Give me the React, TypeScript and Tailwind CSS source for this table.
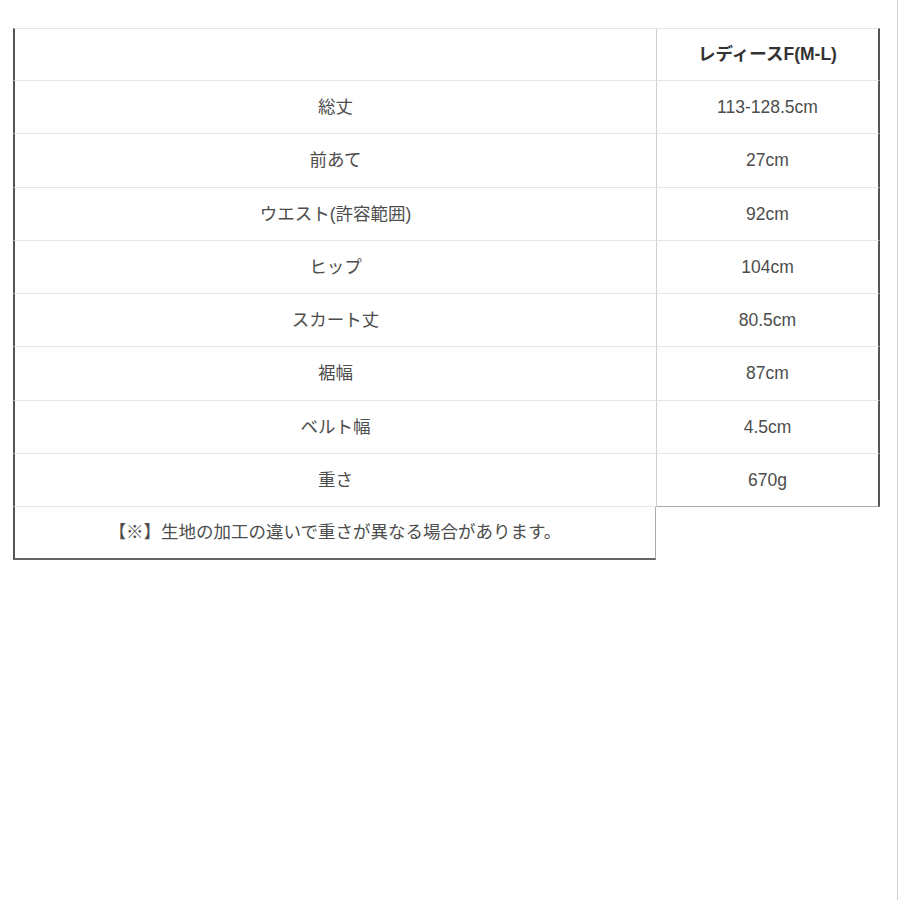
const rows: [string, string][] = [
  ["総丈", "113-128.5cm"],
  ["前あて", "27cm"],
  ["ウエスト(許容範囲)", "92cm"],
  ["ヒップ", "104cm"],
  ["スカート丈", "80.5cm"],
  ["裾幅", "87cm"],
  ["ベルト幅", "4.5cm"],
  ["重さ", "670g"],
]

export default function App() {
  return (
    <div
      className="w-[898px] h-[900px] border-r border-[#d4d4d4] bg-white text-[#4d4d4d] text-[17.5px]"
      style={{ fontFamily: '"Liberation Sans", "Noto Sans CJK JP", sans-serif' }}
    >
      <div className="pl-[13px] pt-[28px]">
        <div className="grid grid-cols-[643px_224px]">
          {/* header */}
          <div className="h-[53px] border-l-2 border-l-[#555] border-t border-t-[#e6e6e6] border-b border-b-[#e6e6e6]" />
          <div className="h-[53px] flex items-center justify-center font-bold text-[17.5px] text-[#333] border-l border-l-[#d0d0d0] border-r-2 border-r-[#555] border-t border-t-[#e6e6e6] border-b border-b-[#e6e6e6]">
            レディースF(M-L)
          </div>

          {rows.map(([label, value], i) => {
            const last = i === rows.length - 1
            return (
              <div key={label} className="contents">
                <div className="h-[53.25px] flex items-center justify-center border-l-2 border-l-[#555] border-b border-b-[#e6e6e6]">
                  {label}
                </div>
                <div
                  className={`h-[53.25px] flex items-center justify-center border-l border-l-[#d0d0d0] border-r-2 border-r-[#555] border-b ${
                    last ? "border-b-[#aaa]" : "border-b-[#e6e6e6]"
                  }`}
                >
                  {value}
                </div>
              </div>
            )
          })}

          {/* note */}
          <div className="h-[53px] flex items-center justify-center border-l-2 border-l-[#555] border-r border-r-[#aaa] border-b-2 border-b-[#666]">
            【※】生地の加工の違いで重さが異なる場合があります。
          </div>
        </div>
      </div>
    </div>
  )
}
